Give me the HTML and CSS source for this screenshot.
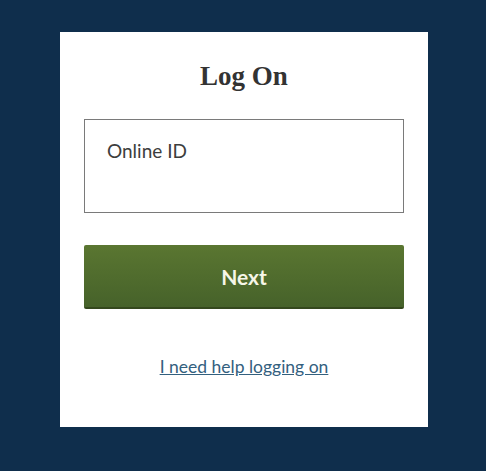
FILE: index.html
```html
<!DOCTYPE html>
<html lang="en">
<head>
<meta charset="utf-8">
<title>Log On</title>
<link rel="stylesheet" href="styles.css">
</head>
<body>
<main class="card">
  <h1 class="title">Log On</h1>
  <label class="field">
    <span class="field-label">Online ID</span>
  </label>
  <button class="next-btn" type="button">Next</button>
  <a class="help-link" href="#">I need help logging on</a>
</main>
</body>
</html>
```
FILE: styles.css
```css
html, body {
  margin: 0;
  padding: 0;
}
body {
  background: #0f2e4c;
  width: 486px;
  height: 471px;
  overflow: hidden;
  font-family: Lato, "Open Sans", sans-serif;
}
.card {
  box-sizing: border-box;
  margin: 32px 0 0 60px;
  width: 368px;
  height: 395px;
  background: #ffffff;
  padding: 28px 24px 0;
  display: flex;
  flex-direction: column;
}
.title {
  margin: 0;
  font-family: "Liberation Serif", "Times New Roman", serif;
  font-weight: 700;
  font-size: 27px;
  line-height: 32px;
  color: #333333;
  text-align: center;
}
.field {
  box-sizing: border-box;
  margin-top: 27px;
  height: 94px;
  border: 1px solid #7a7a7a;
  padding: 19px 22px 0;
  display: block;
}
.field-label {
  font-size: 19px;
  line-height: 24px;
  color: #3d3d3d;
}
.next-btn {
  box-sizing: border-box;
  margin-top: 32px;
  height: 64px;
  border: none;
  border-bottom: 2px solid #34481d;
  border-radius: 2px;
  background: linear-gradient(#5a7631, #46622a);
  color: #f6f6e8;
  font-family: Lato, "Open Sans", sans-serif;
  font-weight: 700;
  font-size: 21px;
  padding: 0;
}
.help-link {
  margin-top: 47px;
  align-self: center;
  font-size: 17.5px;
  line-height: 22px;
  color: #33607e;
  text-decoration: underline;
}
```
